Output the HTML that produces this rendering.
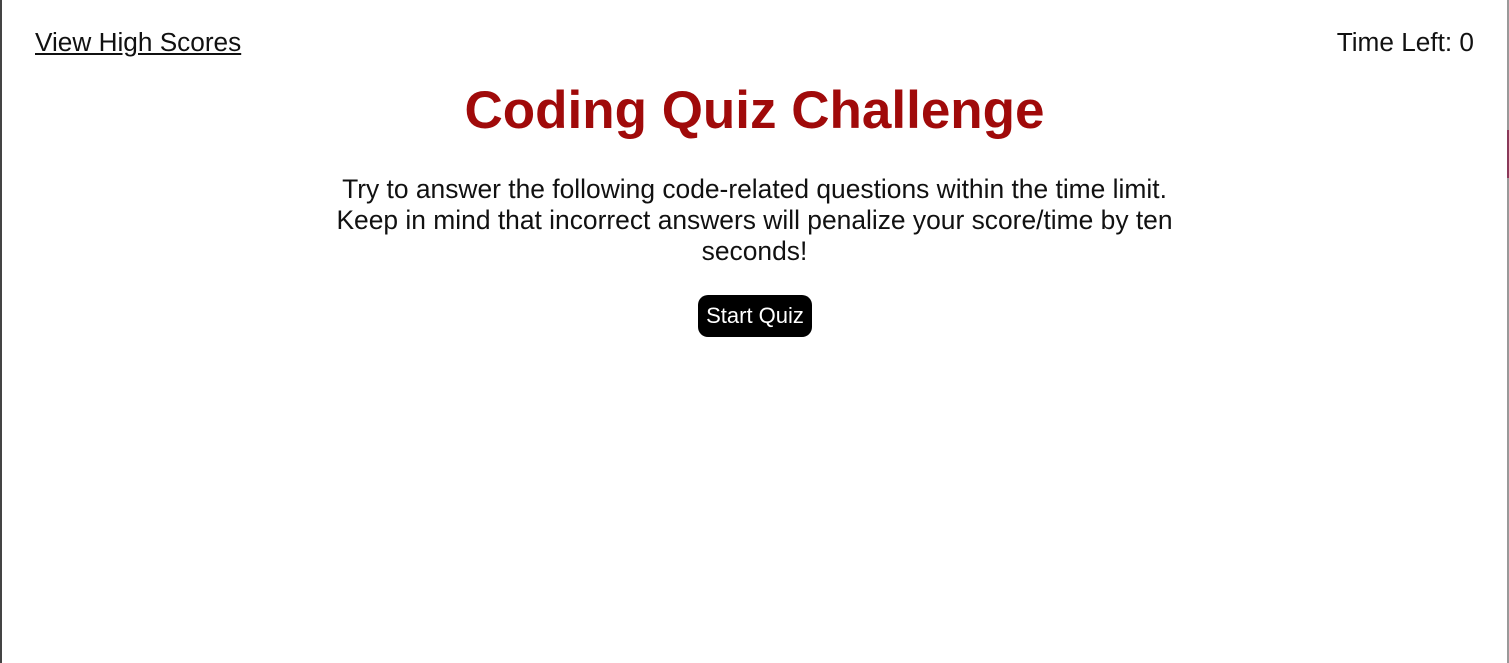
<!DOCTYPE html>
<html><head><style>
html,body{margin:0;padding:0;width:1509px;height:663px;overflow:hidden;background:#fff;font-family:"Liberation Sans",Arial,sans-serif;}
.lb{position:absolute;left:0;top:0;width:2px;height:663px;background:#444;}
.rb{position:absolute;left:1507px;top:0;width:2px;height:663px;background:#999;}
.rb2{position:absolute;left:1507px;top:130px;width:2px;height:48px;background:#8a3a5a;}
.nav{position:absolute;left:35px;top:27px;font-size:26.2px;color:#111;text-decoration:underline;}
.time{position:absolute;right:35px;top:27px;font-size:26.2px;color:#111;}
h1{position:absolute;left:0;width:1509px;top:81px;margin:0;text-align:center;font-size:53px;font-weight:bold;color:#a00a0a;line-height:60px;}
p{position:absolute;left:327px;width:855px;top:174px;margin:0;text-align:center;font-size:26.4px;line-height:31px;color:#111;}
.btn{position:absolute;left:698px;top:295px;width:114px;height:42px;background:#000;color:#fff;border-radius:10px;font-size:22px;line-height:42px;text-align:center;}
</style></head><body>
<div class="lb"></div><div class="rb"></div><div class="rb2"></div>
<div class="nav">View High Scores</div>
<div class="time">Time Left: 0</div>
<h1>Coding Quiz Challenge</h1>
<p>Try to answer the following code-related questions within the time limit.<br>Keep in mind that incorrect answers will penalize your score/time by ten seconds!</p>
<div class="btn">Start Quiz</div>
</body></html>
